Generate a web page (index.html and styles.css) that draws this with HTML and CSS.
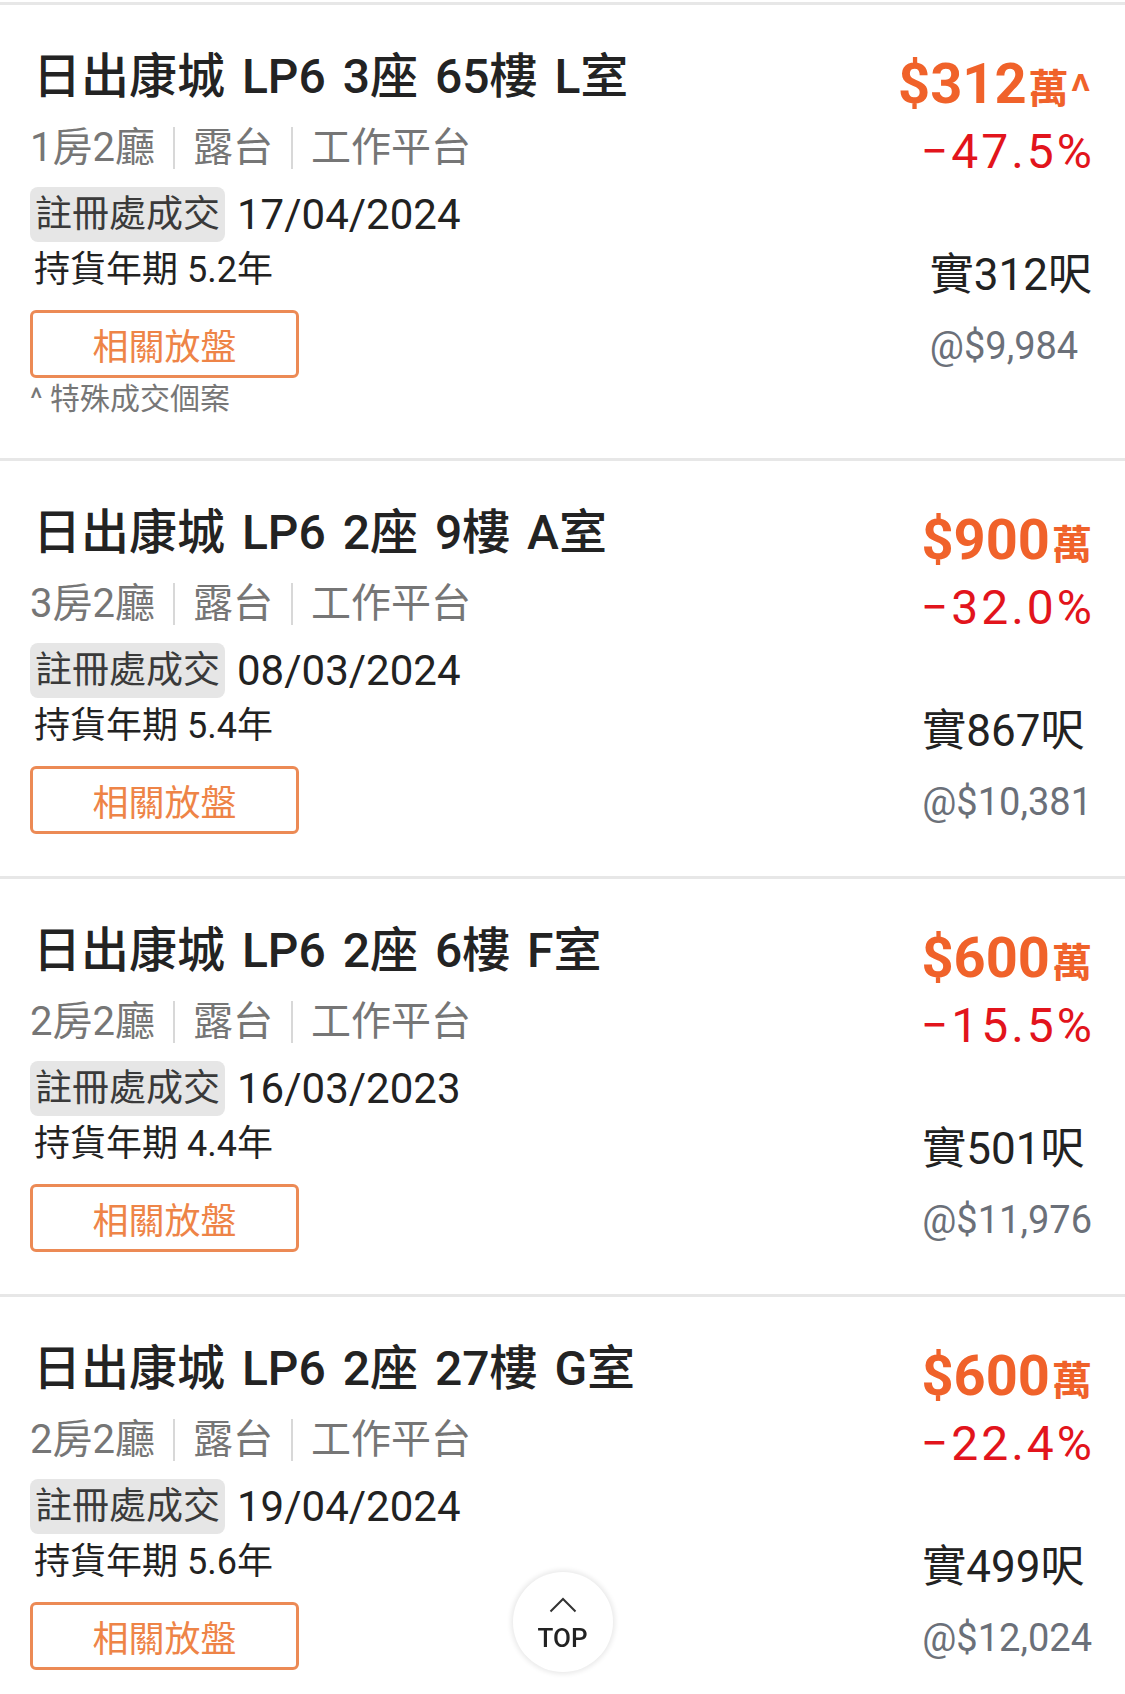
FILE: index.html
```html
<!DOCTYPE html>
<html lang="zh-Hant">
<head>
<meta charset="utf-8">
<title>日出康城 成交</title>
<link rel="stylesheet" href="styles.css">
</head>
<body>
<div class="list">
  <div class="card">
    <div class="info">
      <div class="title">日出康城 LP6 3座 65樓 L室</div>
      <div class="sub"><span>1房2廳</span><i class="sep"></i><span>露台</span><i class="sep"></i><span>工作平台</span></div>
      <div class="deal"><span class="tag">註冊處成交</span><span class="date">17/04/2024</span></div>
      <div class="hold">持貨年期 5.2年</div>
      <div class="btn">相關放盤</div>
      <div class="note">^ 特殊成交個案</div>
    </div>
    <div class="figs">
      <div class="price">$312<span class="wan">萬</span><span class="caret">^</span></div>
      <div class="pct">−47.5%</div>
      <div class="area">
        <div class="size">實312呎</div>
        <div class="unit">@$9,984</div>
      </div>
    </div>
  </div>

  <div class="card">
    <div class="info">
      <div class="title">日出康城 LP6 2座 9樓 A室</div>
      <div class="sub"><span>3房2廳</span><i class="sep"></i><span>露台</span><i class="sep"></i><span>工作平台</span></div>
      <div class="deal"><span class="tag">註冊處成交</span><span class="date">08/03/2024</span></div>
      <div class="hold">持貨年期 5.4年</div>
      <div class="btn">相關放盤</div>
    </div>
    <div class="figs">
      <div class="price">$900<span class="wan">萬</span></div>
      <div class="pct">−32.0%</div>
      <div class="area">
        <div class="size">實867呎</div>
        <div class="unit">@$10,381</div>
      </div>
    </div>
  </div>

  <div class="card">
    <div class="info">
      <div class="title">日出康城 LP6 2座 6樓 F室</div>
      <div class="sub"><span>2房2廳</span><i class="sep"></i><span>露台</span><i class="sep"></i><span>工作平台</span></div>
      <div class="deal"><span class="tag">註冊處成交</span><span class="date">16/03/2023</span></div>
      <div class="hold">持貨年期 4.4年</div>
      <div class="btn">相關放盤</div>
    </div>
    <div class="figs">
      <div class="price">$600<span class="wan">萬</span></div>
      <div class="pct">−15.5%</div>
      <div class="area">
        <div class="size">實501呎</div>
        <div class="unit">@$11,976</div>
      </div>
    </div>
  </div>

  <div class="card">
    <div class="info">
      <div class="title">日出康城 LP6 2座 27樓 G室</div>
      <div class="sub"><span>2房2廳</span><i class="sep"></i><span>露台</span><i class="sep"></i><span>工作平台</span></div>
      <div class="deal"><span class="tag">註冊處成交</span><span class="date">19/04/2024</span></div>
      <div class="hold">持貨年期 5.6年</div>
      <div class="btn">相關放盤</div>
    </div>
    <div class="figs">
      <div class="price">$600<span class="wan">萬</span></div>
      <div class="pct">−22.4%</div>
      <div class="area">
        <div class="size">實499呎</div>
        <div class="unit">@$12,024</div>
      </div>
    </div>
  </div>
</div>

<a class="top-btn" href="#">
  <svg class="chev" width="28" height="16" viewBox="0 0 28 16"><polyline points="1.5,14.5 14,2 26.5,14.5" fill="none" stroke="#333" stroke-width="2"/></svg>
  <span class="top-text">TOP</span>
</a>
</body>
</html>
```

FILE: styles.css
```css
* { box-sizing: border-box; }

html, body {
  margin: 0;
  padding: 0;
  background: #ffffff;
}

body {
  padding-top: 2px;
  font-family: Roboto, "Noto Sans CJK TC", "Noto Sans CJK SC", sans-serif;
  color: #222222;
}

.list {
  display: flex;
  flex-direction: column;
}

.card {
  display: flex;
  justify-content: space-between;
  align-items: flex-start;
  border-top: 3px solid #e7e7e7;
  padding: 42px 33px 42px 30px;
}

.info {
  display: flex;
  flex-direction: column;
  align-items: flex-start;
}

.title {
  padding-left: 3px;
  font-size: 48px;
  line-height: 60px;
  font-weight: 500;
  word-spacing: 5px;
  color: #232323;
  white-space: nowrap;
}

.sub {
  margin-top: 16px;
  display: flex;
  align-items: center;
  font-size: 40px;
  line-height: 50px;
  color: #767676;
}

.sep {
  display: block;
  width: 2px;
  height: 42px;
  background: #d8d8d8;
  margin: 0 18px;
}

.deal {
  margin-top: 14px;
  display: flex;
  align-items: center;
  height: 55px;
}

.tag {
  display: block;
  font-size: 37px;
  line-height: 55px;
  height: 55px;
  padding: 0 5px;
  background: #e6e6e6;
  border-radius: 8px;
  color: #3a3a3a;
}

.date {
  margin-left: 12px;
  font-size: 42px;
  line-height: 55px;
  color: #222222;
}

.hold {
  margin-top: 6px;
  padding-left: 4px;
  font-size: 36px;
  line-height: 44px;
  color: #222222;
}

.btn {
  margin-top: 18px;
  width: 269px;
  height: 68px;
  border: 3px solid #ec8a55;
  border-radius: 6px;
  display: flex;
  align-items: center;
  justify-content: center;
  font-size: 36px;
  color: #ee8447;
}

.note {
  margin-top: 4px;
  font-size: 30px;
  line-height: 34px;
  color: #777777;
}

.figs {
  display: flex;
  flex-direction: column;
  align-items: flex-end;
}

.price {
  font-size: 56px;
  line-height: 74px;
  font-weight: 700;
  color: #f0622a;
  white-space: nowrap;
}

.wan {
  font-size: 40px;
  margin-left: 2px;
}

.caret {
  font-family: "Noto Sans CJK TC", sans-serif;
  font-size: 38px;
  margin-left: 1px;
}

.pct {
  font-size: 48px;
  line-height: 49px;
  letter-spacing: 3px;
  margin-right: -3px;
  color: #e2141c;
  white-space: nowrap;
}

.area {
  margin-top: 73px;
  text-align: left;
}

.size {
  font-size: 44px;
  line-height: 52px;
  color: #222222;
  white-space: nowrap;
}

.unit {
  margin-top: 21px;
  font-size: 38px;
  line-height: 48px;
  color: #6b7079;
  white-space: nowrap;
}

.top-btn {
  position: fixed;
  left: 50%;
  bottom: 22px;
  width: 100px;
  height: 100px;
  margin-left: -50px;
  border-radius: 50%;
  background: #ffffff;
  box-shadow: 0 0 5px 2px rgba(0, 0, 0, 0.09);
  display: flex;
  flex-direction: column;
  align-items: center;
  padding-top: 25px;
  text-decoration: none;
}

.chev {
  display: block;
}

.top-text {
  margin-top: 10px;
  font-size: 26px;
  line-height: 30px;
  font-weight: 500;
  color: #222222;
}
```
